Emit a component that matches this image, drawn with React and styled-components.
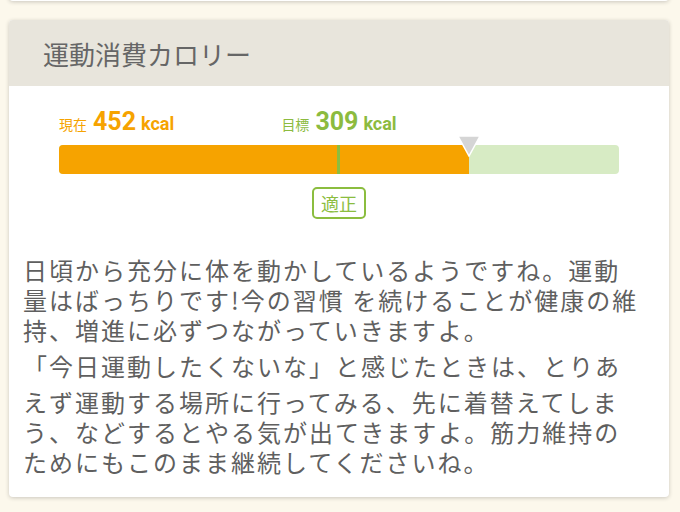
import React from "react";
import styled, { createGlobalStyle } from "styled-components";

const GlobalStyle = createGlobalStyle`
  body {
    margin: 0;
    background: #fcf8ec;
    font-family: "Noto Sans CJK JP", "Noto Sans", sans-serif;
  }
`;

const current = 452;
const target = 309;
const max = target * 2;

const App = () => {
  const ratio = Math.min(current / max, 1) * 100;
  return (
    <Page>
      <GlobalStyle />
      <PrevCard />
      <Card>
        <Header>運動消費カロリー</Header>
        <Meter>
          <Labels>
            <Label $color="#f6a300">
              <small>現在</small>
              <b>{current}</b>
              <i>kcal</i>
            </Label>
            <Label $color="#8cbb3f">
              <small>目標</small>
              <b>{target}</b>
              <i>kcal</i>
            </Label>
          </Labels>
          <Bar>
            <Fill style={{ width: `${ratio}%` }} />
            <TargetLine />
            <Marker style={{ left: `${ratio}%` }}>
              <svg width="24" height="22" viewBox="0 0 24 22">
                <polygon
                  points="1,1 23,1 12,21"
                  fill="#d5d5d5"
                  stroke="#fff"
                  strokeWidth="1.5"
                />
              </svg>
            </Marker>
          </Bar>
          <Badge>適正</Badge>
        </Meter>
        <Message>
          <p>
            日頃から充分に体を動かしているようですね。運動量はばっちりです!今の習慣 を続けることが健康の維持、増進に必ずつながっていきますよ。
          </p>
          <p>
            「今日運動したくないな」と感じたときは、とりあえず運動する場所に行ってみる、先に着替えてしまう、などするとやる気が出てきますよ。筋力維持のためにもこのまま継続してくださいね。
          </p>
        </Message>
      </Card>
    </Page>
  );
};

export default App;

const Page = styled.div`
  padding: 0 11px 40px 9px;
  overflow: hidden;
`;

const PrevCard = styled.div`
  height: 40px;
  margin-top: -39px;
  background: #fff;
  border-radius: 4px;
  box-shadow: 0 1px 4px rgba(0, 0, 0, 0.2);
`;

const Card = styled.div`
  margin-top: 19px;
  background: #fff;
  border-radius: 4px;
  overflow: hidden;
  box-shadow: 0 1px 4px rgba(0, 0, 0, 0.2);
`;

const Header = styled.div`
  display: flex;
  align-items: center;
  height: 66px;
  padding-left: 34px;
  background: #e8e5dc;
  color: #666;
  font-size: 26px;
`;

const Meter = styled.div`
  display: flex;
  flex-direction: column;
  padding: 22px 50px 0;
`;

const Labels = styled.div`
  display: grid;
  grid-template-columns: 1fr auto 1fr;
  height: 28px;
  line-height: 28px;
`;

const Label = styled.div`
  display: flex;
  align-items: baseline;
  color: ${(p) => p.$color};
  white-space: nowrap;

  &:nth-child(2) {
    grid-column: 2;
  }

  small {
    font-size: 14px;
    margin-right: 6px;
  }

  b {
    font-family: Roboto, "Liberation Sans", sans-serif;
    font-size: 25px;
    font-weight: 700;
    margin-right: 5px;
  }

  i {
    font-family: Roboto, "Liberation Sans", sans-serif;
    font-style: normal;
    font-weight: 700;
    font-size: 18px;
  }
`;

const Bar = styled.div`
  position: relative;
  display: flex;
  height: 29px;
  margin-top: 9px;
  border-radius: 4px;
  background: #d7ebc4;
`;

const Fill = styled.div`
  height: 100%;
  border-radius: 4px 0 0 4px;
  background: #f6a300;
`;

const TargetLine = styled.div`
  position: absolute;
  top: 0;
  bottom: 0;
  left: 50%;
  width: 3px;
  margin-left: -2px;
  background: #8bbd3f;
`;

const Marker = styled.div`
  position: absolute;
  top: -10px;
  transform: translateX(-50%);
  line-height: 0;
`;

const Badge = styled.div`
  align-self: center;
  margin-top: 13px;
  padding: 0 7px;
  border: 2px solid #8bbd3f;
  border-radius: 5px;
  color: #8bbd3f;
  font-size: 18px;
  line-height: 28px;
`;

const Message = styled.div`
  width: 620px;
  margin: 36px 0 0 14px;
  padding-bottom: 20px;
  color: #5f5f5f;
  font-size: 24px;
  letter-spacing: 2px;
  line-height: 30px;

  p {
    margin: 0;
  }

  p + p::first-line {
    line-height: 42px;
  }
`;
